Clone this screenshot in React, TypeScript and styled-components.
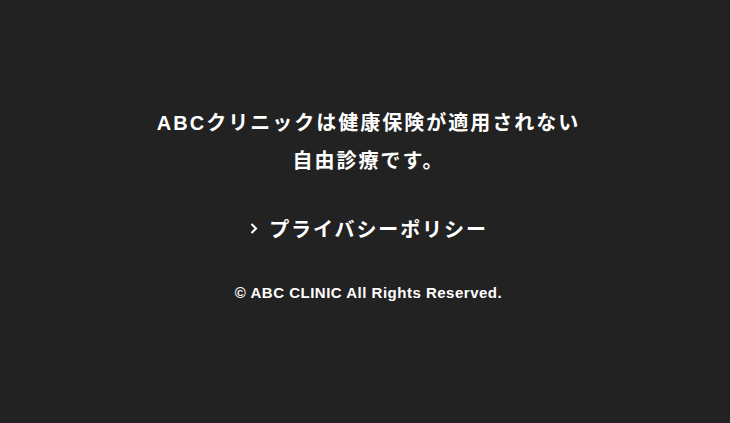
import React from "react";
import styled, { createGlobalStyle } from "styled-components";

const Global = createGlobalStyle`
  html, body { margin: 0; padding: 0; background: #222222; }
  body { font-family: "Liberation Sans", "Noto Sans CJK JP", sans-serif; }
`;

const Footer = styled.footer`
  width: 730px;
  height: 423px;
  box-sizing: border-box;
  background: #222222;
  color: #ffffff;
  display: flex;
  flex-direction: column;
  align-items: center;
  padding: 104px 0 0 7px;
`;

const Notice = styled.p`
  margin: 0;
  font-family: "Liberation Sans", "Noto Sans CJK JP", sans-serif;
  font-size: 20px;
  font-weight: 700;
  line-height: 38px;
  letter-spacing: 2px;
  text-align: center;
`;

const PolicyLink = styled.a`
  margin-top: 35px;
  display: flex;
  align-items: center;
  gap: 11px;
  color: #ffffff;
  text-decoration: none;
  font-family: "Liberation Sans", "Noto Sans CJK JP", sans-serif;
  font-size: 20px;
  font-weight: 700;
  letter-spacing: 1.9px;
  line-height: 30px;
`;

const Chevron = styled.svg`
  width: 9px;
  height: 11px;
  margin-top: -3px;
`;

const Copyright = styled.small`
  margin-top: 38px;
  font-family: "Liberation Sans", "Noto Sans CJK JP", sans-serif;
  font-size: 15px;
  font-weight: 700;
  letter-spacing: 0.5px;
  line-height: 20px;
`;

export default function App() {
  return (
    <>
      <Global />
      <Footer>
        <Notice>
          ABCクリニックは健康保険が適用されない
          <br />
          自由診療です。
        </Notice>
        <PolicyLink href="#">
          <Chevron viewBox="0 0 9 11">
            <path d="M2.5 1 L7 5.5 L2.5 10" fill="none" stroke="#fff" strokeWidth="2.1" />
          </Chevron>
          プライバシーポリシー
        </PolicyLink>
        <Copyright>© ABC CLINIC All Rights Reserved.</Copyright>
      </Footer>
    </>
  );
}
